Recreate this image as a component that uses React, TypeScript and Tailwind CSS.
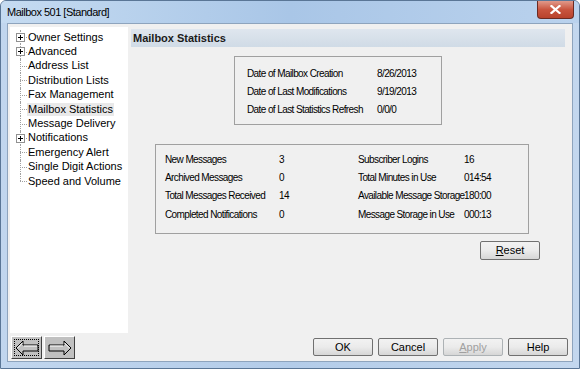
import React from 'react';

const font = { fontFamily: '"Liberation Sans", Arial, sans-serif' };

const treeItems: { label: string; expandable?: boolean; selected?: boolean }[] = [
  { label: 'Owner Settings', expandable: true },
  { label: 'Advanced', expandable: true },
  { label: 'Address List' },
  { label: 'Distribution Lists' },
  { label: 'Fax Management' },
  { label: 'Mailbox Statistics', selected: true },
  { label: 'Message Delivery' },
  { label: 'Notifications', expandable: true },
  { label: 'Emergency Alert' },
  { label: 'Single Digit Actions' },
  { label: 'Speed and Volume' },
];

const dates = [
  ['Date of Mailbox Creation', '8/26/2013'],
  ['Date of Last Modifications', '9/19/2013'],
  ['Date of Last Statistics Refresh', '0/0/0'],
];

const leftStats = [
  ['New Messages', '3'],
  ['Archived Messages', '0'],
  ['Total Messages Received', '14'],
  ['Completed Notifications', '0'],
];

const rightStats = [
  ['Subscriber Logins', '16'],
  ['Total Minutes in Use', '014:54'],
  ['Available Message Storage', '180:00'],
  ['Message Storage in Use', '000:13'],
];

const TreeRow = ({ label, expandable, selected, last }: { label: string; expandable?: boolean; selected?: boolean; last?: boolean }) => (
  <div className="relative flex items-center h-[14.4px] pl-[17px]">
    {/* vertical connector */}
    <div className={`absolute left-[10px] top-0 ${last ? 'h-1/2' : 'h-full'} border-l border-dotted border-[#a0a0a0]`} />
    {/* horizontal connector */}
    <div className="absolute left-[10px] top-1/2 w-[7px] border-t border-dotted border-[#a0a0a0]" />
    {expandable && (
      <div className="absolute left-[6px] top-[3px] w-[9px] h-[9px] bg-white border border-[#919191] flex items-center justify-center">
        <svg width="5" height="5" viewBox="0 0 5 5">
          <path d="M0 2.5H5M2.5 0V5" stroke="#000" strokeWidth="1" />
        </svg>
      </div>
    )}
    <span className={`px-[1px] leading-[13px] whitespace-nowrap ${selected ? 'bg-[#e9e9e9]' : ''}`}>{label}</span>
  </div>
);

const WinButton = ({ children, disabled, className = '' }: { children: React.ReactNode; disabled?: boolean; className?: string }) => (
  <div
    className={`h-[18px] flex items-center justify-center border border-[#707070] rounded-[2px] bg-gradient-to-b from-[#f2f2f2] via-[#ebebeb] to-[#d6d6d6] ${disabled ? 'text-[#a0a0a0] border-[#adb2b5]' : 'text-black'} ${className}`}
  >
    {children}
  </div>
);

const NavButton = ({ dir, focused }: { dir: 'left' | 'right'; focused?: boolean }) => (
  <div className="w-[31px] h-[23px] bg-[#c0c0c0] border border-t-white border-l-white border-r-[#404040] border-b-[#404040] flex items-center justify-center relative">
    {focused && <div className="absolute inset-[2px] border border-dotted border-black" />}
    <svg width="26" height="16" viewBox="0 0 26 16">
      {dir === 'left' ? (
        <path d="M2 8 L9 1 L9 5 L24 5 L24 11 L9 11 L9 15 Z" fill="#c0c0c0" stroke="#000" strokeWidth="1" />
      ) : (
        <path d="M24 8 L17 1 L17 5 L2 5 L2 11 L17 11 L17 15 Z" fill="#c0c0c0" stroke="#000" strokeWidth="1" />
      )}
      {dir === 'left' ? (
        <path d="M3.5 8 L8.5 3 M10 6 L23 6" stroke="#fff" strokeWidth="1" fill="none" />
      ) : (
        <path d="M3 6 L16 6 M17.5 3 L22.5 8" stroke="#fff" strokeWidth="1" fill="none" />
      )}
    </svg>
  </div>
);

export default function App() {
  return (
    <div className="w-[580px] h-[369px] overflow-hidden flex flex-col bg-gradient-to-r from-[#c1d6ee] via-[#b3cce9] to-[#c3d7ee] border border-[#5a7696] rounded-t-[6px] text-[11px] text-black" style={font}>
      {/* title bar */}
      <div className="h-[22px] flex items-start justify-between shrink-0 bg-gradient-to-r from-[#c5dbf1] via-[#a9c6e7] to-[#bad2ed]">
        <div className="pl-[6px] pt-[4px] text-[11px] leading-[14px] tracking-[-0.5px] text-black">
          Mailbox 501 [Standard]
        </div>
        <div className="mr-[5px] w-[37px] h-[18px] rounded-b-[4px] border border-[#6b2a22] border-t-0 bg-gradient-to-b from-[#e0998a] via-[#c9553f] to-[#b8422c] flex items-center justify-center">
          <svg width="11" height="9" viewBox="0 0 11 9">
            <path d="M1.5 1 L9.5 8 M9.5 1 L1.5 8" stroke="#fff" strokeWidth="2.2" strokeLinecap="square" />
          </svg>
        </div>
      </div>

      {/* client area */}
      <div className="flex-1 mx-[6px] mb-[6px] bg-[#f0f0f0] border border-[#8ea4bd] flex flex-col">
        <div className="flex flex-1">
          {/* tree */}
          <div className="ml-[2px] mt-[3px] w-[118px] h-[306px] bg-white pt-[3px]">
            {treeItems.map((t, i) => (
              <TreeRow key={t.label} {...t} last={i === treeItems.length - 1} />
            ))}
          </div>

          {/* right panel */}
          <div className="flex-1 flex flex-col pl-[3px] pr-[7px] pt-[5px]">
            <div className="h-[18px] bg-gradient-to-b from-[#dfe6ee] to-[#d0dbe6] flex items-center pl-[2px] font-bold text-[11px] text-[#1a1a1a]">
              Mailbox Statistics
            </div>

            <div className="ml-[103px] mt-[9px] w-[208px] h-[69px] border border-[#a0a0a0] pl-[12px] pt-[7px] text-[10px] tracking-[-0.6px]">
              {dates.map(([l, v]) => (
                <div key={l} className="flex h-[18px] items-center whitespace-nowrap">
                  <span className="w-[130px]">{l}</span>
                  <span>{v}</span>
                </div>
              ))}
            </div>

            <div className="ml-[24px] mt-[19px] w-[374px] h-[90px] border border-[#a0a0a0] pl-[9px] pt-[5px] flex text-[10px] tracking-[-0.6px]">
              <div className="w-[193px]">
                {leftStats.map(([l, v]) => (
                  <div key={l} className="flex h-[18.3px] items-center whitespace-nowrap">
                    <span className="w-[114px]">{l}</span>
                    <span>{v}</span>
                  </div>
                ))}
              </div>
              <div>
                {rightStats.map(([l, v]) => (
                  <div key={l} className="flex h-[18.3px] items-center whitespace-nowrap">
                    <span className="w-[106px]">{l}</span>
                    <span>{v}</span>
                  </div>
                ))}
              </div>
            </div>

            <div className="flex justify-end mt-[7px] pr-[25px]">
              <WinButton className="w-[60px] h-[19px]">
                <span><u>R</u>eset</span>
              </WinButton>
            </div>
          </div>
        </div>

        {/* bottom row */}
        <div className="h-[28px] flex items-start pt-[3px] pl-[3px] pr-[4px]">
          <div className="flex gap-[2px]">
            <NavButton dir="left" focused />
            <NavButton dir="right" />
          </div>
          <div className="ml-auto flex gap-[5px] pt-[2px]">
            <WinButton className="w-[60px]">OK</WinButton>
            <WinButton className="w-[60px]">Cancel</WinButton>
            <WinButton className="w-[60px]" disabled>
              <span><u>A</u>pply</span>
            </WinButton>
            <WinButton className="w-[60px]">Help</WinButton>
          </div>
        </div>
      </div>
    </div>
  );
}
